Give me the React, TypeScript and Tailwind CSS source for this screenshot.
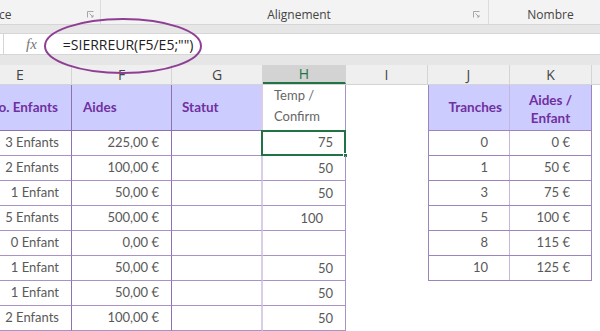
import React from "react";

const cellFont = { fontFamily: "Lato, 'Open Sans', sans-serif" };
const uiFont = { fontFamily: "'Open Sans', 'Noto Sans', sans-serif" };

const leftRows = [
  ["3 Enfants", "225,00 €", "75"],
  ["2 Enfants", "100,00 €", "50"],
  ["1 Enfant", "50,00 €", "50"],
  ["5 Enfants", "500,00 €", "100"],
  ["0 Enfant", "0,00 €", ""],
  ["1 Enfant", "50,00 €", "50"],
  ["1 Enfant", "50,00 €", "50"],
  ["2 Enfants", "100,00 €", "50"],
];

const tranches = [
  ["0", "0 €"],
  ["1", "50 €"],
  ["3", "75 €"],
  ["5", "100 €"],
  ["8", "115 €"],
  ["10", "125 €"],
];

function Launcher() {
  return (
    <svg width="7" height="7" viewBox="0 0 7 7" className="shrink-0">
      <path d="M0.5 6.5V0.5H6.5" fill="none" stroke="#a6a6a6" strokeWidth="1" />
      <path d="M2.5 2.5L6 6M6 4V6H4" fill="none" stroke="#a6a6a6" strokeWidth="1" />
    </svg>
  );
}

export default function App() {
  return (
    <div className="w-[600px] h-[331px] overflow-hidden bg-white relative select-none">
      {/* Ribbon group labels */}
      <div className="h-[25px] bg-[#f3f3f3] border-b border-[#d6d6d6] flex text-[12px] leading-[16px] text-[#444]" style={uiFont}>
        <div className="w-[101px] flex items-end justify-between pb-[1px] pr-[6px] border-r border-[#dcdcdc]">
          <span className="-ml-[1px]">ce</span>
          <span className="mb-[5px]"><Launcher /></span>
        </div>
        <div className="w-[388px] flex items-end pb-[1px] pr-[8px] border-r border-[#dcdcdc]">
          <span className="flex-1 text-center pl-[24px]">Alignement</span>
          <span className="mb-[5px]"><Launcher /></span>
        </div>
        <div className="flex-1 flex items-end justify-center pb-[1px] pl-[12px]">
          <span>Nombre</span>
        </div>
      </div>

      <div className="h-[8px] bg-[#e6e6e6]" />

      {/* Formula bar */}
      <div className="h-[22px] bg-white border-y border-[#d6d6d6] flex items-center relative" style={uiFont}>
        <div className="w-[4px] h-full border-r border-[#d6d6d6]" />
        <span className="ml-[22px] text-[15px] italic text-[#777]" style={{ fontFamily: "'Liberation Serif', serif" }}>
          fx
        </span>
        <span className="ml-[26px] text-[14px] text-[#222]">=SIERREUR(F5/E5;"")</span>
        <svg className="absolute left-[40px] top-[-19px]" width="170" height="62" viewBox="0 0 170 62">
          <ellipse cx="83" cy="31" rx="78" ry="27" fill="none" stroke="#8e3f93" strokeWidth="2" />
        </svg>
      </div>

      <div className="h-[10px] bg-[#e6e6e6]" />

      {/* Column headers */}
      <div className="h-[20px] flex bg-[#efefef] border-b border-[#d4d4d4] text-[14px] text-[#444]" style={uiFont}>
        <div className="w-[72px] flex items-center border-r border-[#d4d4d4] pl-[16px]">E</div>
        <div className="w-[100px] flex items-center justify-center border-r border-[#d4d4d4]">F</div>
        <div className="w-[91px] flex items-center justify-center border-r border-[#d4d4d4]">G</div>
        <div className="w-[83px] flex items-center justify-center border-r border-[#d4d4d4] bg-[#d3d3d3] text-[#217346] border-b-2 border-b-[#217346]">H</div>
        <div className="w-[82px] flex items-center justify-center border-r border-[#d4d4d4]">I</div>
        <div className="w-[82px] flex items-center justify-center border-r border-[#d4d4d4]">J</div>
        <div className="w-[82px] flex items-center justify-center border-r border-[#d4d4d4]">K</div>
        <div className="flex-1" />
      </div>

      {/* Sheet */}
      <div className="flex items-start text-[13px] text-[#595959]" style={cellFont}>
        {/* Left table E..H */}
        <div className="flex flex-col ml-[-30px]">
          <div className="flex h-[46px] font-bold text-[#7030a0] text-[13.5px]">
            <div className="w-[102px] bg-[#ccccff] border-r border-b border-[#8c72b0] flex items-center justify-end pr-[13px]">
              No. Enfants
            </div>
            <div className="w-[100px] bg-[#ccccff] border-r border-b border-[#8c72b0] flex items-center pl-[11px]">
              Aides
            </div>
            <div className="w-[91px] bg-[#ccccff] border-r-2 border-r-[#d9cdea] border-b border-b-[#8c72b0] flex items-center pl-[10px]">
              Statut
            </div>
            <div className="w-[83px] border-r border-b border-[#a993c6] flex flex-col justify-center pl-[11px] pb-[4px] leading-[21px] text-[#666] font-normal text-[13px]">
              <span>Temp /</span>
              <span>Confirm</span>
            </div>
          </div>
          {leftRows.map((r, i) => (
            <div key={i} className="flex h-[25px]">
              <div className="w-[102px] border-r border-b border-r-[#8c72b0] border-b-[#a993c6] flex items-center justify-end pr-[12px]">
                {r[0]}
              </div>
              <div className="w-[100px] border-r border-b border-r-[#8c72b0] border-b-[#a993c6] flex items-center justify-end pr-[12px]">
                {r[1]}
              </div>
              <div className="w-[91px] border-r-2 border-b border-r-[#d9cdea] border-b-[#a993c6]" />
              <div
                className={
                  "w-[83px] border-r border-b border-r-[#a993c6] border-b-[#a993c6] flex justify-end relative " +
                  (i === 0 ? "items-center pr-[12px]" : i === 3 ? "items-end pb-[2px] pr-[22px]" : "items-end pb-[2px] pr-[12px]")
                }
              >
                {r[2]}
                {i === 0 && (
                  <>
                    <div className="absolute left-[-2px] top-[-1px] right-[-1px] bottom-[-1px] border-2 border-[#217346]" />
                    <div className="absolute right-[-3px] bottom-[-3px] w-[5px] h-[5px] bg-[#217346] border border-white" />
                  </>
                )}
              </div>
            </div>
          ))}
        </div>

        {/* Column I */}
        <div className="w-[82px]" />

        {/* Right table J..K */}
        <div className="flex flex-col border-l border-r border-[#9c85bd]">
          <div className="flex h-[46px] bg-[#ccccff] border-b border-[#9c85bd] font-bold text-[#7030a0] text-[13.5px]">
            <div className="w-[81px] border-r border-[#c6b6de] flex items-center justify-end pr-[7px]">Tranches</div>
            <div className="w-[81px] flex flex-col items-center justify-center leading-[18px] pt-[2px]">
              <span>Aides /</span>
              <span>Enfant</span>
            </div>
          </div>
          {tranches.map((t, i) => (
            <div key={i} className="flex h-[25px] border-b border-[#9c85bd]">
              <div className="w-[81px] border-r border-[#c6b6de] flex items-center justify-end pr-[21px]">{t[0]}</div>
              <div className="w-[81px] flex items-center justify-end pr-[21px]">{t[1]}</div>
            </div>
          ))}
        </div>
      </div>
    </div>
  );
}
